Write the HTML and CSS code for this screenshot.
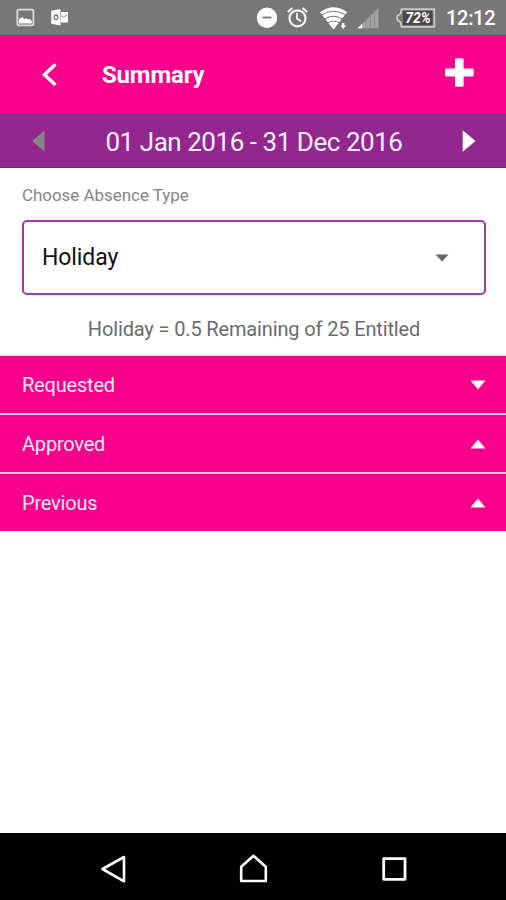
FILE: index.html
```html
<!DOCTYPE html>
<html lang="en">
<head>
<meta charset="utf-8">
<title>Summary</title>
<link rel="stylesheet" href="styles.css">
</head>
<body>
<div class="status">
  <svg width="80" height="35" viewBox="0 0 80 35">
    <rect x="17.4" y="9.7" width="16" height="15.6" rx="1" fill="none" stroke="#ddd" stroke-width="1.8"/>
    <path d="M19 23.5v-4l3-2.5 2.500 2 1.500-1 2 1.500 1.500-.8 2.300 2.300v2.500z" fill="#fff"/>
    <path d="M51.300 10.800 60.500 9v16.500l-9.200-1.800zM61 12h7v10.500h-7z" fill="#fff"/>
    <ellipse cx="56" cy="17.300" rx="1.900" ry="2.300" fill="none" stroke="#777" stroke-width="1.300"/>
    <path d="M61 15.500l2.200 1.800 4.300-2.300" fill="none" stroke="#999" stroke-width="1"/>
  </svg>
  <svg class="indicators" width="140" height="35" viewBox="250 0 140 35">
    <circle cx="267" cy="17.800" r="10.200" fill="#fff"/>
    <path d="M262.500 17.500h9" stroke="#777" stroke-width="1.800"/>
    <g fill="none" stroke="#f4f4f4">
      <circle cx="297.500" cy="18.300" r="8" stroke-width="2.200"/>
      <path d="M297 13v5.500l4 2.800" stroke-width="1.900"/>
      <path d="M287.800 12l4.600-4M302.600 8l4.600 4" stroke-width="2.200"/>
    </g>
    <path d="M320 12.200Q333.500 2.500 347 12.200L333.500 29.500Z" fill="#fff"/>
    <path d="M321.500 15Q333.500 7.500 345.500 15M324.500 19Q333.500 13.500 342.500 19M327.800 22.800Q333.500 19.500 339.200 22.800" fill="none" stroke="#777" stroke-width="1"/>
    <path d="M340 22h7v8h-7z" fill="#777"/>
    <path d="M342 23h2.400v2.500h1.600L343.200 29l-2.800-3.500H342z" fill="#fff"/>
    <path d="M357.500 28.300 378.500 8v20.300z" fill="#a2a2a2"/>
    <path d="M357.500 28.300 362.200 23.700v4.600z" fill="#fff"/>
    <path d="M366 18v11M370.300 14v15M374.500 10v19" stroke="#8b8b8b" stroke-width="1"/>
  </svg>
  <div class="battery">
    <svg width="41" height="20" viewBox="0 0 41 20">
      <path d="M6.500 1.200h32.800v17.600H6.500L5.500 14Q2 13 2 10t3.500-4z" fill="#777" stroke="#c8c8c8" stroke-width="1.800"/>
      <path d="M8 3h29.500v14H8z" fill="#484848"/>
    </svg>
    <span class="level">72%</span>
  </div>
  <span class="clock">12:12</span>
</div>
<header class="header">
  <svg width="20" height="28" viewBox="40 61 20 28"><path d="M55.500 65.300 44.500 75.700 55.500 86" fill="none" stroke="#fff" stroke-width="3.500"/></svg>
  <h1 class="title">Summary</h1>
  <svg class="add" width="30" height="30" viewBox="444 58 30 30"><path d="M455 59.500q0-1.300 1.300-1.300h6q1.300 0 1.300 1.300v9h8.800q1.300 0 1.300 1.300v5.400q0 1.300-1.300 1.300h-8.800v9q0 1.300-1.300 1.300h-6q-1.300 0-1.300-1.300v-9h-8.700q-1.300 0-1.300-1.300v-5.400q0-1.300 1.300-1.300h8.700z" fill="#fff"/></svg>
</header>
<div class="period">
  <svg width="14" height="22" viewBox="0 0 14 22"><path d="M0 11 12.500.5v21z" fill="#858585"/></svg>
  <span class="range">01 Jan 2016 - 31 Dec 2016</span>
  <svg width="14" height="22" viewBox="0 0 14 22"><path d="M13.500 11 .7.300v21.400z" fill="#fff"/></svg>
</div>
<main class="content">
  <div class="label">Choose Absence Type</div>
  <div class="select">
    <span>Holiday</span>
    <svg width="14" height="8" viewBox="0 0 14 8"><path d="M.5.500h13L7 7.500z" fill="#666"/></svg>
  </div>
  <div class="balance">Holiday = 0.5 Remaining of 25 Entitled</div>
</main>
<div class="section first"><span>Requested</span><svg width="16" height="10" viewBox="0 0 16 10"><path d="M.5.500h15L8 9.500z" fill="#fff"/></svg></div>
<div class="section"><span>Approved</span><svg width="16" height="10" viewBox="0 0 16 10"><path d="M.5 9.500h15L8 .5z" fill="#fff"/></svg></div>
<div class="section"><span>Previous</span><svg width="16" height="10" viewBox="0 0 16 10"><path d="M.5 9.500h15L8 .5z" fill="#fff"/></svg></div>
<nav class="nav">
  <svg width="26" height="30" viewBox="100 854 26 30"><path d="M124 857v24.300L102.500 869z" fill="none" stroke="#fff" stroke-width="2.600" stroke-linejoin="round"/></svg>
  <svg width="30" height="30" viewBox="239 854 30 30"><path d="M241.200 881V866.800L253.500 855.800 265.800 866.800V881z" fill="none" stroke="#fff" stroke-width="2.600" stroke-linejoin="round"/></svg>
  <svg width="26" height="30" viewBox="381 854 26 30"><rect x="383.700" y="858.700" width="21.300" height="20.600" fill="none" stroke="#fff" stroke-width="2.800" stroke-linejoin="round"/></svg>
</nav>
</body>
</html>
```
FILE: styles.css
```css
* { box-sizing: border-box; }
body {
  margin: 0;
  height: 900px;
  display: flex;
  flex-direction: column;
  background: #fff;
  font-family: Roboto, sans-serif;
  white-space: nowrap;
  overflow: hidden;
}
svg { display: block; flex: none; }
.status {
  height: 35px;
  flex: none;
  display: flex;
  align-items: center;
  background: #777;
  color: #fff;
}
.indicators { margin-left: 170px; }
.battery { position: relative; margin-left: 5px; width: 41px; height: 20px; }
.level {
  position: absolute;
  inset: 0 0 0 5px;
  text-align: center;
  font-size: 14px;
  line-height: 20px;
  font-weight: 700;
  font-style: italic;
}
.clock { margin-left: 10px; font-size: 20px; font-weight: 500; letter-spacing: -0.3px; }
.header {
  height: 78px;
  flex: none;
  display: flex;
  align-items: center;
  padding: 0 32px 0 40px;
  background: #f8008b;
  color: #fff;
}
.title {
  margin: 1px 0 0 42px;
  font-size: 24px;
  line-height: 30px;
  font-weight: 700;
  letter-spacing: -0.2px;
}
.add { margin: -3px 0 0 auto; }
.period {
  height: 55px;
  flex: none;
  display: flex;
  align-items: center;
  justify-content: space-between;
  padding: 1px 30px 0 32px;
  background: #92278f;
  border-bottom: 1px solid #8a1480;
  color: #fff0ff;
}
.range { font-size: 26px; line-height: 32px; padding-top: 3px; letter-spacing: -0.46px; }
.content { height: 187px; flex: none; padding: 17px 20px 0 22px; }
.label { height: 20px; font-size: 17px; line-height: 20px; color: #858585; letter-spacing: -0.05px; }
.select {
  height: 75px;
  margin-top: 15px;
  padding: 0 35px 0 18px;
  display: flex;
  align-items: center;
  justify-content: space-between;
  border: 2px solid #a23aa0;
  border-radius: 5px;
  font-size: 23px;
  letter-spacing: -0.1px;
  color: #111;
}
.balance {
  margin-top: 22px;
  text-align: center;
  font-size: 20px;
  line-height: 24px;
  letter-spacing: -0.14px;
  color: #6b6b6b;
}
.section {
  height: 59px;
  flex: none;
  display: flex;
  align-items: center;
  justify-content: space-between;
  padding: 1px 20px 0 22px;
  border-top: 2px solid #ffc4e4;
  background: #f8008b;
  color: #ffeaf6;
  font-size: 20px;
  letter-spacing: -0.2px;
}
.first { height: 58px; margin-top: 0; border-top-width: 1px; }
.content { height: 187px; }
.nav {
  height: 67px;
  flex: none;
  margin-top: auto;
  display: flex;
  align-items: center;
  justify-content: space-between;
  padding: 4px 99px 0 100px;
  background: #000;
}
```
